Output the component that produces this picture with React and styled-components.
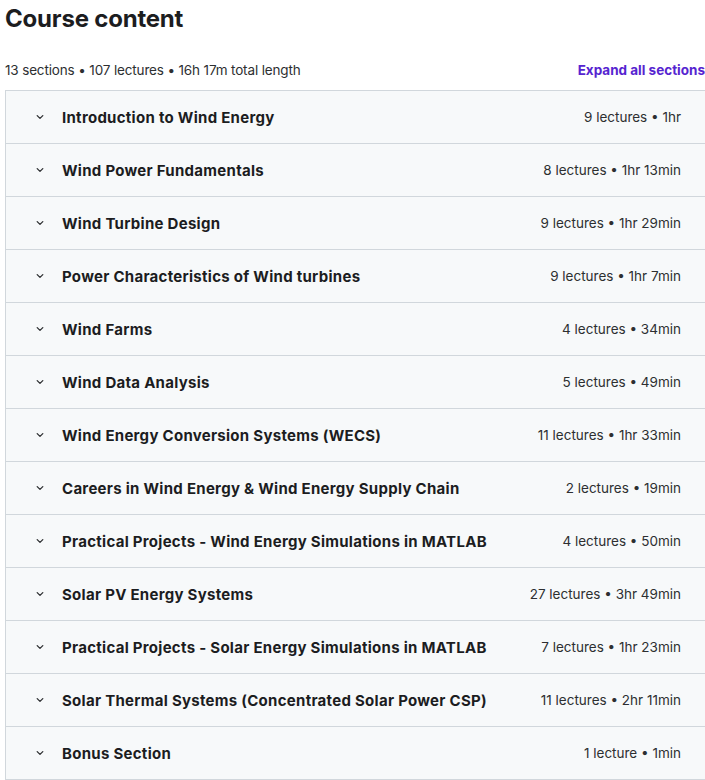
import styled, { createGlobalStyle } from "styled-components";

const GlobalStyle = createGlobalStyle`
  body {
    margin: 0;
    background: #fff;
    font-family: Inter, "Noto Sans", sans-serif;
    color: #2d2f31;
  }
`;

const sections = [
  { title: "Introduction to Wind Energy", meta: "9 lectures • 1hr" },
  { title: "Wind Power Fundamentals", meta: "8 lectures • 1hr 13min" },
  { title: "Wind Turbine Design", meta: "9 lectures • 1hr 29min" },
  { title: "Power Characteristics of Wind turbines", meta: "9 lectures • 1hr 7min" },
  { title: "Wind Farms", meta: "4 lectures • 34min" },
  { title: "Wind Data Analysis", meta: "5 lectures • 49min" },
  { title: "Wind Energy Conversion Systems (WECS)", meta: "11 lectures • 1hr 33min" },
  { title: "Careers in Wind Energy & Wind Energy Supply Chain", meta: "2 lectures • 19min" },
  { title: "Practical Projects - Wind Energy Simulations in MATLAB", meta: "4 lectures • 50min" },
  { title: "Solar PV Energy Systems", meta: "27 lectures • 3hr 49min" },
  { title: "Practical Projects - Solar Energy Simulations in MATLAB", meta: "7 lectures • 1hr 23min" },
  { title: "Solar Thermal Systems (Concentrated Solar Power CSP)", meta: "11 lectures • 2hr 11min" },
  { title: "Bonus Section", meta: "1 lecture • 1min" },
];

const Wrapper = styled.div`
  padding: 0 0 0 5px;
`;

const Heading = styled.h2`
  margin: 0;
  padding-top: 4px;
  font-size: 24px;
  line-height: 30px;
  font-weight: 700;
  letter-spacing: -0.2px;
  color: #1c1d1f;
`;

const Summary = styled.div`
  display: flex;
  justify-content: space-between;
  align-items: center;
  margin-top: 21px;
  height: 30px;
  font-size: 13.5px;
  letter-spacing: -0.15px;
`;

const ExpandLink = styled.button`
  border: 0;
  background: none;
  padding: 0;
  font: inherit;
  letter-spacing: 0;
  font-weight: 700;
  color: #5624d0;
  cursor: pointer;
`;

const Accordion = styled.div`
  margin-top: 5px;
  border: 1px solid #d1d7dc;
  border-right: 0;
`;

const Row = styled.div`
  display: flex;
  align-items: center;
  height: 52px;
  padding: 0 24px 0 28px;
  background: #f7f9fa;
  border-top: ${(p) => (p.$first ? "0" : "1px solid #d1d7dc")};
`;

const Chevron = styled.svg`
  width: 12px;
  height: 12px;
  flex: none;
  margin-right: 16px;
`;

const Title = styled.span`
  flex: 1;
  font-size: 15px;
  font-weight: 700;
  letter-spacing: 0.28px;
  color: #1c1d1f;
`;

const Meta = styled.span`
  font-size: 13.5px;
  color: #2d2f31;
`;

function Section({ title, meta, first }) {
  return (
    <Row $first={first}>
      <Chevron viewBox="0 0 12 12">
        <path d="M3.2 4.6 L6 7.4 L8.8 4.6" fill="none" stroke="#2d2f31" strokeWidth="1.3" strokeLinecap="round" strokeLinejoin="round" />
      </Chevron>
      <Title>{title}</Title>
      <Meta>{meta}</Meta>
    </Row>
  );
}

export default function App() {
  return (
    <Wrapper>
      <GlobalStyle />
      <Heading>Course content</Heading>
      <Summary>
        <span>13 sections • 107 lectures • 16h 17m total length</span>
        <ExpandLink>Expand all sections</ExpandLink>
      </Summary>
      <Accordion>
        {sections.map((s, i) => (
          <Section key={s.title} {...s} first={i === 0} />
        ))}
      </Accordion>
    </Wrapper>
  );
}
